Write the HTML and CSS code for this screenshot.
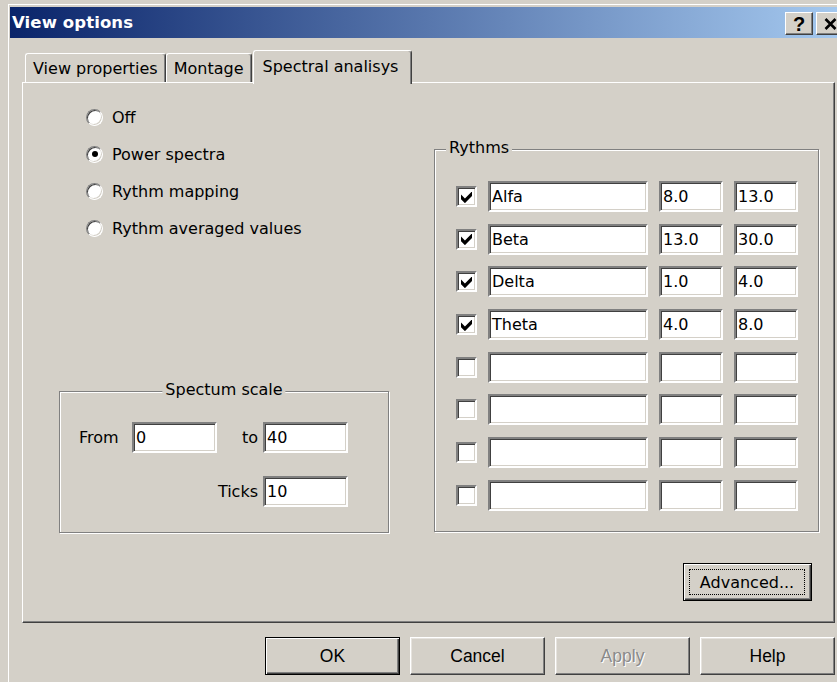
FILE: index.html
```html
<!DOCTYPE html>
<html lang="en">
<head>
<meta charset="utf-8">
<title>View options</title>
<link rel="stylesheet" href="styles.css">
</head>
<body>
<div class="frame">
  <div class="titlebar">
    <span class="title">View options</span>
    <div class="caption-btns">
      <span class="cap-btn help-glyph">?</span>
      <span class="cap-btn">
        <svg class="close-icon" width="13" height="12" viewBox="0 0 13 12"><path d="M1.5 1 L11.5 11 M11.5 1 L1.5 11" stroke="#000" stroke-width="2.6" fill="none"/></svg>
      </span>
    </div>
  </div>

  <div class="client">
    <div class="tabs">
      <div class="tab">View properties</div>
      <div class="tab">Montage</div>
      <div class="tab active">Spectral analisys</div>
    </div>

    <div class="panel">
      <div class="col-left">
        <div class="radios">
          <div class="radio-row"><span class="radio"></span><span>Off</span></div>
          <div class="radio-row"><span class="radio on"></span><span>Power spectra</span></div>
          <div class="radio-row"><span class="radio"></span><span>Rythm mapping</span></div>
          <div class="radio-row"><span class="radio"></span><span>Rythm averaged values</span></div>
        </div>

        <div class="group scale">
          <span class="legend centered">Spectum scale</span>
          <div class="scale-grid">
            <span class="lbl">From</span>
            <span class="field">0</span>
            <span class="lbl right">to</span>
            <span class="field">40</span>
            <span></span>
            <span></span>
            <span class="lbl right">Ticks</span>
            <span class="field">10</span>
          </div>
        </div>
      </div>

      <div class="col-right">
        <div class="group rythms">
          <span class="legend">Rythms</span>
          <div class="rows">
            <span class="check on"><svg width="11" height="11" viewBox="0 0 7 7"><polygon points="0,1.6 2.5,4.1 7,-0.4 7,2.6 2.5,7.1 0,4.6"/></svg></span>
            <span class="field">Alfa</span><span class="field">8.0</span><span class="field">13.0</span>

            <span class="check on"><svg width="11" height="11" viewBox="0 0 7 7"><polygon points="0,1.6 2.5,4.1 7,-0.4 7,2.6 2.5,7.1 0,4.6"/></svg></span>
            <span class="field">Beta</span><span class="field">13.0</span><span class="field">30.0</span>

            <span class="check on"><svg width="11" height="11" viewBox="0 0 7 7"><polygon points="0,1.6 2.5,4.1 7,-0.4 7,2.6 2.5,7.1 0,4.6"/></svg></span>
            <span class="field">Delta</span><span class="field">1.0</span><span class="field">4.0</span>

            <span class="check on"><svg width="11" height="11" viewBox="0 0 7 7"><polygon points="0,1.6 2.5,4.1 7,-0.4 7,2.6 2.5,7.1 0,4.6"/></svg></span>
            <span class="field">Theta</span><span class="field">4.0</span><span class="field">8.0</span>

            <span class="check"></span>
            <span class="field"></span><span class="field"></span><span class="field"></span>

            <span class="check"></span>
            <span class="field"></span><span class="field"></span><span class="field"></span>

            <span class="check"></span>
            <span class="field"></span><span class="field"></span><span class="field"></span>

            <span class="check"></span>
            <span class="field"></span><span class="field"></span><span class="field"></span>
          </div>
        </div>

        <div class="btn default advanced"><span class="focus">Advanced...</span></div>
      </div>
    </div>

    <div class="actions">
      <div class="btn default action">OK</div>
      <div class="btn action">Cancel</div>
      <div class="btn action disabled">Apply</div>
      <div class="btn action">Help</div>
    </div>
  </div>
</div>
</body>
</html>
```

FILE: styles.css
```css
* {
  box-sizing: border-box;
}

html,
body {
  margin: 0;
}

body {
  width: 837px;
  height: 682px;
  overflow: hidden;
  background: #d4d0c8;
  font-family: "DejaVu Sans", Verdana, sans-serif;
  font-size: 16px;
  color: #000;
}

/* window frame */
.frame {
  margin: 4px 0 0 8px;
  width: 860px;
  height: 700px;
  padding: 2px 0 0 1px;
  border-top: 1px solid #fff;
  border-left: 1px solid #fff;
  background: #d4d0c8;
}

/* caption bar */
.titlebar {
  width: 836px;
  height: 31px;
  display: flex;
  align-items: center;
  padding: 0 2px;
  background: linear-gradient(to right, #0a246a 0%, #a6caf0 100%);
}

.title {
  color: #fff;
  font-weight: bold;
  font-size: 16.5px;
  letter-spacing: 0.1px;
}

.caption-btns {
  margin-left: auto;
  align-self: flex-start;
  margin-top: 5px;
  display: flex;
  gap: 3px;
}

.cap-btn {
  width: 28px;
  height: 23px;
  display: flex;
  align-items: center;
  justify-content: center;
  background: #d4d0c8;
  border: 1px solid;
  border-color: #fff #404040 #404040 #fff;
  box-shadow: inset -1px -1px #808080;
}

.help-glyph {
  font-family: "Liberation Sans", Arial, sans-serif;
  font-weight: bold;
  font-size: 20px;
  line-height: 1;
  padding-top: 1px;
}

/* dialog client area */
.client {
  padding: 12px 0 0 12px;
}

.tabs {
  position: relative;
  z-index: 1;
  display: flex;
  align-items: flex-end;
  height: 32px;
  padding-left: 3px;
}

.tab {
  height: 29px;
  display: flex;
  align-items: center;
  padding: 0 7px;
  background: #d4d0c8;
  border-top: 1px solid #fff;
  border-left: 1px solid #fff;
  border-right: 1px solid #404040;
  border-radius: 3px 3px 0 0;
  box-shadow: inset -1px 0 #808080;
  white-space: nowrap;
}

.tab.active {
  height: 34px;
  margin: 0 0 -2px 1px;
  padding: 0 13px 2px 9px;
}

.panel {
  width: 813px;
  height: 541px;
  display: grid;
  grid-template-columns: 330px 385px;
  column-gap: 45px;
  align-items: start;
  padding-left: 36px;
  border: 1px solid;
  border-color: #fff #404040 #404040 #fff;
  box-shadow: inset -1px -1px #808080;
}

/* left column */
.radios {
  padding: 15.5px 0 0 27px;
}

.radio-row {
  height: 37px;
  display: flex;
  align-items: center;
  gap: 9px;
  white-space: nowrap;
}

.radio {
  position: relative;
  flex: none;
  width: 17px;
  height: 17px;
  border-radius: 50%;
  background: #fff;
  border: 1px solid;
  border-color: #808080 #fff #fff #808080;
  box-shadow: inset 1px 1px #404040, inset -1px -1px #d4d0c8;
}

.radio.on::after {
  content: "";
  position: absolute;
  left: 50%;
  top: 50%;
  width: 6px;
  height: 6px;
  margin: -3px 0 0 -3px;
  border-radius: 50%;
  background: #000;
}

/* etched group boxes */
.group {
  position: relative;
  border: 1px solid #808080;
  box-shadow: inset 1px 1px #fff, 1px 1px #fff;
}

.legend {
  position: absolute;
  top: -11px;
  left: 11px;
  padding: 0 3px;
  line-height: 18px;
  background: #d4d0c8;
  white-space: nowrap;
}

.legend.centered {
  left: 50%;
  transform: translateX(-50%);
}

.scale {
  margin-top: 144.5px;
  width: 330px;
  height: 142px;
}

.scale-grid {
  display: grid;
  grid-template-columns: 53px 85px 46px 85px;
  grid-auto-rows: 31px;
  row-gap: 23px;
  align-items: center;
  padding: 30px 0 0 19px;
}

.lbl.right {
  text-align: right;
  padding-right: 5px;
}

/* sunken edit fields */
.field {
  height: 31px;
  display: flex;
  align-items: center;
  padding-left: 2px;
  background: #fff;
  border: 2px solid;
  border-color: #808080 #fff #fff #808080;
  box-shadow: inset 1px 1px #404040, inset -1px -1px #d4d0c8;
  white-space: nowrap;
  overflow: hidden;
}

/* right column */
.col-right {
  display: flex;
  flex-direction: column;
  padding-top: 66px;
}

.rythms {
  height: 383px;
  padding: 31px 0 0 21px;
}

.rows {
  display: grid;
  grid-template-columns: 21px 160px 64px 64px;
  column-gap: 11px;
  grid-auto-rows: 31px;
  row-gap: 11.7px;
  align-items: center;
}

.check {
  width: 21px;
  height: 21px;
  display: flex;
  align-items: center;
  justify-content: center;
  background: #fff;
  border: 2px solid;
  border-color: #808080 #fff #fff #808080;
  box-shadow: inset 1px 1px #404040, inset -1px -1px #d4d0c8;
}

.check svg {
  fill: #000;
  margin: 1px 1px 0 0;
}

/* push buttons */
.btn {
  display: flex;
  align-items: center;
  justify-content: center;
  background: #d4d0c8;
  border: 1px solid;
  border-color: #fff #404040 #404040 #fff;
  box-shadow: inset -1px -1px #808080, inset 1px 1px #e6e3de;
  white-space: nowrap;
}

.btn.default {
  border: 1px solid #000;
  box-shadow: inset 1px 1px #fff, inset -1px -1px #404040, inset -2px -2px #808080;
}

.advanced {
  align-self: flex-end;
  width: 129px;
  height: 38px;
  margin: 31px 7px 0 0;
  padding: 5px 6px 5px 5px;
}

.advanced .focus {
  flex: 1;
  align-self: stretch;
  display: flex;
  align-items: center;
  justify-content: center;
  border: 1px dotted #000;
  padding-top: 1px;
}

.actions {
  width: 813px;
  margin-top: 14px;
  display: flex;
  justify-content: flex-end;
  gap: 10px;
}

.action {
  width: 135px;
  height: 38px;
  font-family: "Liberation Sans", Arial, sans-serif;
  font-size: 17.5px;
}

.action.disabled {
  color: #8a8a8a;
  text-shadow: 1px 1px #fff;
}
```
